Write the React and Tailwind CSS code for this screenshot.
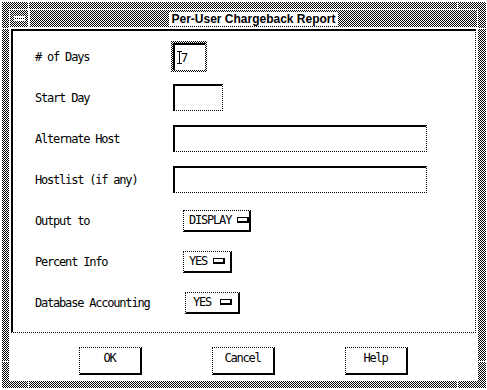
import React from "react";

// 1px checkerboard (stripes xor'ed) used by the Motif frame, title bar and focus ring
const dither =
	"bg-[image:linear-gradient(90deg,#000_1px,#fff_1px),linear-gradient(#000_1px,#fff_1px)] bg-[length:2px_2px] bg-blend-difference";
const mono =
	"font-['DejaVu_Sans_Mono','Liberation_Mono',monospace] text-[12px] leading-[14px] tracking-[-1.2px] text-black whitespace-nowrap";

const Row = ({ label, children }) => (
	<div className="flex h-[41px] items-center">
		<div className={`w-[136px] ${mono}`}>{label}</div>
		<div className="flex items-center">{children}</div>
	</div>
);

const TextField = ({ width }) => (
	<div
		className={`ml-[2px] h-[27px] ${width} bg-white border-t-2 border-l-2 border-r border-b border-black [border-right-style:dotted] [border-bottom-style:dotted]`}
	/>
);

const OptionMenu = ({ value, className }) => (
	<div
		className={`flex h-[22px] items-center border-t border-l border-r-2 border-b-2 border-black [border-top-style:dotted] [border-left-style:dotted] ${className}`}
	>
		<span className={mono}>{value}</span>
		<span className="h-[6px] w-[12px] bg-white border-t border-l border-r-2 border-b-2 border-black" />
	</div>
);

const PushButton = ({ label }) => (
	<div
		className={`flex h-[28px] w-[63px] items-center justify-center bg-white pb-[6px] border-t border-l border-r-2 border-b-2 border-black [border-top-style:dotted] [border-left-style:dotted] ${mono}`}
	>
		{label}
	</div>
);

export default function App() {
	return (
		<div className="h-[390px] w-[487px] bg-white pt-[2px] pl-[2px] pr-[1px] pb-[2px]">
			<div className={`relative flex h-full w-full flex-col pt-[7px] pl-[7px] pr-[8px] pb-[7px] ${dither}`}>
				{/* corner breaks in the resize frame */}
				<div className="absolute left-[26px] top-0 h-[7px] w-[1px] bg-white" />
				<div className="absolute left-[455px] top-0 h-[7px] w-[1px] bg-white" />
				<div className="absolute left-[26px] bottom-0 h-[7px] w-[1px] bg-white" />
				<div className="absolute left-[455px] bottom-0 h-[7px] w-[1px] bg-white" />
				<div className="absolute left-0 top-[26px] h-[1px] w-[7px] bg-white" />
				<div className="absolute right-0 top-[26px] h-[1px] w-[8px] bg-white" />
				<div className="absolute left-0 top-[359px] h-[1px] w-[7px] bg-white" />
				<div className="absolute right-0 top-[359px] h-[1px] w-[8px] bg-white" />

				<div className="flex flex-1 flex-col bg-white">
					{/* title bar */}
					<div className="mx-[1px] mt-[1px] flex h-[17px] gap-[2px]">
						<div className={`flex w-[18px] items-center justify-center ${dither}`}>
							<div className="flex h-[5px] w-[11px] items-center bg-white px-[1px]">
								<div className="h-0 w-full border-t border-black [border-top-style:dotted]" />
							</div>
						</div>
						<div className={`flex flex-1 items-center justify-center ${dither}`}>
							<div className="bg-white px-[2px] font-['Liberation_Sans',Arial,sans-serif] text-[12px] font-bold leading-[14px] text-black">
								Per-User Chargeback Report
							</div>
						</div>
					</div>

					{/* work area */}
					<div className="mx-[2px] mt-[2px] h-[304px] border-t-2 border-l-2 border-r border-b border-black [border-right-style:dotted] [border-bottom-style:dotted] pl-[22px] pt-[5px]">
						<Row label="# of Days">
							<div className={`h-[31px] w-[36px] p-[2px] ${dither}`}>
								<div className="flex h-full w-full items-center bg-white border-t-2 border-l-2 border-black pl-[2px]">
									<svg width="6" height="13" viewBox="0 0 6 13" className="shrink-0">
										<path d="M0 0.5H5M0 12.5H5M2.5 0V13" stroke="#000" strokeWidth="1" fill="none" />
									</svg>
									<span className={`-ml-[2px] ${mono}`}>7</span>
								</div>
							</div>
						</Row>
						<Row label="Start Day">
							<TextField width="w-[50px]" />
						</Row>
						<Row label="Alternate Host">
							<TextField width="w-[254px]" />
						</Row>
						<Row label="Hostlist (if any)">
							<TextField width="w-[254px]" />
						</Row>
						<Row label="Output to">
							<OptionMenu value="DISPLAY" className="ml-[12px] w-[68px] pl-[5px] gap-[6px]" />
						</Row>
						<Row label="Percent Info">
							<OptionMenu value="YES" className="ml-[12px] w-[49px] pl-[5px] gap-[6px]" />
						</Row>
						<Row label="Database Accounting">
							<OptionMenu value="YES" className="ml-[14px] w-[55px] pl-[7px] gap-[9px]" />
						</Row>
					</div>

					{/* action buttons */}
					<div className="flex justify-center gap-[70px] pt-[14px] pr-[1px]">
						<PushButton label="OK" />
						<PushButton label="Cancel" />
						<PushButton label="Help" />
					</div>
				</div>
			</div>
		</div>
	);
}
